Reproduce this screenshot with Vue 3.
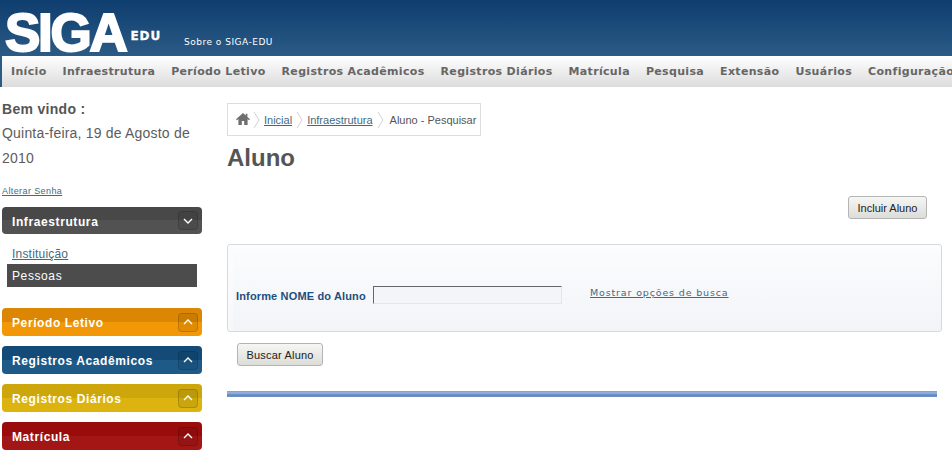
<template>
  <div class="page">
    <header class="top">
      <div class="logo">SIGA<span class="logo-edu">EDU</span></div>
      <a class="about">Sobre o SIGA-EDU</a>
    </header>

    <nav class="nav">
      <a v-for="item in navItems" :key="item">{{ item }}</a>
    </nav>

    <div class="columns">
      <aside class="side">
        <h4>Bem vindo :</h4>
        <p class="date">Quinta-feira, 19 de Agosto de 2010</p>
        <a class="pass">Alterar Senha</a>

        <div class="panel-head dark">
          <span>Infraestrutura</span>
          <i class="toggle">
            <svg width="10" height="6" viewBox="0 0 10 6"><path d="M1 1l4 4 4-4" /></svg>
          </i>
        </div>
        <ul class="sub">
          <li><a>Instituição</a></li>
          <li class="current">Pessoas</li>
        </ul>

        <div v-for="p in panels" :key="p.label" class="panel-head" :class="p.tone">
          <span>{{ p.label }}</span>
          <i class="toggle">
            <svg width="10" height="6" viewBox="0 0 10 6"><path d="M1 5l4-4 4 4" /></svg>
          </i>
        </div>
      </aside>

      <main class="main">
        <div class="crumbs">
          <svg class="home" width="14" height="12" viewBox="0 0 14 12">
            <path d="M7 0L0 6.200l1 1L2.400 6v6h3.400V8h2.400v4h3.400V6L13 7.200l1-1-2.600-2.300V.8H9.800v1.700z" />
          </svg>
          <svg class="sep" width="7" height="18" viewBox="0 0 7 18"><path d="M1 1l5 8-5 8" /></svg>
          <a>Inicial</a>
          <svg class="sep" width="7" height="18" viewBox="0 0 7 18"><path d="M1 1l5 8-5 8" /></svg>
          <a>Infraestrutura</a>
          <svg class="sep" width="7" height="18" viewBox="0 0 7 18"><path d="M1 1l5 8-5 8" /></svg>
          <span class="here">Aluno - Pesquisar</span>
        </div>

        <h1>Aluno</h1>

        <div class="actions">
          <button class="btn">Incluir Aluno</button>
        </div>

        <form class="search" @submit.prevent>
          <label for="nome">Informe NOME do Aluno</label>
          <input id="nome" type="text" />
          <a class="more">Mostrar opções de busca</a>
        </form>

        <button class="btn find">Buscar Aluno</button>

        <div class="rule"></div>
      </main>
    </div>
  </div>
</template>

<script setup>
const navItems = [
  'Início',
  'Infraestrutura',
  'Período Letivo',
  'Registros Acadêmicos',
  'Registros Diários',
  'Matrícula',
  'Pesquisa',
  'Extensão',
  'Usuários',
  'Configuração'
]

const panels = [
  { label: 'Período Letivo', tone: 'orange' },
  { label: 'Registros Acadêmicos', tone: 'blue' },
  { label: 'Registros Diários', tone: 'yellow' },
  { label: 'Matrícula', tone: 'red' }
]
</script>

<style>
html,
body {
  margin: 0;
  overflow: hidden;
  background: #fff;
}
</style>

<style scoped>
.page {
  width: 952px;
  height: 455px;
  overflow: hidden;
  font-family: "Liberation Sans", Arial, sans-serif;
  color: #555;
  background: #fff;
}

a {
  color: #3f6b7f;
  text-decoration: underline;
}

/* cabecalho */
.top {
  height: 56px;
  display: flex;
  align-items: flex-start;
  background: linear-gradient(#0e3d6f, #2b5b85);
}

.logo {
  width: 179px;
  margin: 8px 0 0 5px;
  font-size: 53px;
  line-height: 50px;
  font-weight: 700;
  letter-spacing: -2.300px;
  color: #fff;
  -webkit-text-stroke: 2px #fff;
  white-space: nowrap;
}

.logo-edu {
  display: inline-block;
  margin-left: 5px;
  font-family: "DejaVu Sans", sans-serif;
  font-size: 12px;
  line-height: 12px;
  letter-spacing: 1px;
  vertical-align: 11px;
  -webkit-text-stroke: 0.3px #fff;
}

.about {
  margin-top: 36px;
  font-family: "DejaVu Sans", sans-serif;
  font-size: 9px;
  line-height: 12px;
  letter-spacing: 0.5px;
  color: #fff;
  text-decoration: none;
}

.nav {
  height: 31px;
  display: flex;
  align-items: center;
  gap: 16px;
  padding-left: 9px;
  border-left: 2px solid #2b5b85;
  overflow: hidden;
  white-space: nowrap;
  background: linear-gradient(#fff, #dcdcdc);
}

.nav a {
  flex: none;
  font-family: "DejaVu Sans", sans-serif;
  font-size: 11px;
  font-weight: 700;
  letter-spacing: 0.33px;
  color: #666;
  text-decoration: none;
}

.columns {
  display: flex;
}

/* coluna esquerda */
.side {
  flex: none;
  width: 200px;
  margin-left: 2px;
  padding-top: 13px;
}

.side h4 {
  margin: 0;
  font-size: 14px;
  line-height: 18px;
  letter-spacing: 0.3px;
}

.date {
  margin: 3px 0 0;
  font-size: 14px;
  line-height: 25px;
  letter-spacing: 0.2px;
  color: #5c5c5c;
}

.pass {
  display: block;
  margin-top: 14px;
  font-size: 9px;
  line-height: 12px;
  letter-spacing: 0.4px;
}

.panel-head {
  height: 28px;
  margin-top: 10px;
  padding: 0 4px 0 10px;
  display: flex;
  align-items: center;
  justify-content: space-between;
  border-radius: 4px;
  font-size: 12px;
  font-weight: 700;
  letter-spacing: 0.6px;
  color: #fff;
}

.panel-head span {
  padding-top: 2px;
}

.panel-head.dark {
  height: 27px;
  background: linear-gradient(#484848 50%, #525252 50%);
}
.orange {
  background: linear-gradient(#db8703 50%, #f29705 50%);
}
.blue {
  background: linear-gradient(#134a77 50%, #1d5a88 50%);
}
.yellow {
  background: linear-gradient(#cda60b 50%, #dcb30f 50%);
}
.red {
  background: linear-gradient(#9a0c0c 50%, #a21616 50%);
}

.toggle {
  width: 20px;
  height: 19px;
  box-sizing: border-box;
  display: flex;
  align-items: center;
  justify-content: center;
  border: 1px solid rgba(0, 0, 0, 0.15);
  border-radius: 4px;
  background: rgba(0, 0, 0, 0.08);
}

.toggle svg {
  fill: none;
  stroke: #fff;
  stroke-width: 1.4;
}

.sub {
  list-style: none;
  margin: 0;
  padding: 11px 5px;
  font-size: 12px;
  letter-spacing: 0.2px;
}

.sub li {
  height: 19px;
  line-height: 18px;
  padding-left: 5px;
}

.sub .current {
  height: 23px;
  line-height: 24px;
  letter-spacing: 0.6px;
  color: #fff;
  background: #4c4c4c;
}

/* conteudo */
.main {
  flex: none;
  width: 715px;
  margin-left: 25px;
  padding-top: 16px;
}

.crumbs {
  box-sizing: border-box;
  width: 254px;
  height: 33px;
  display: flex;
  align-items: center;
  gap: 4px;
  padding-left: 8px;
  border: 1px solid #ddd;
  font-size: 11px;
}

.home {
  fill: #6f6f6f;
  margin-bottom: 2px;
  margin-right: -1px;
}

.sep {
  fill: none;
  stroke: #d2d2d2;
}

.here {
  margin-left: 2px;
}

.main h1 {
  margin: 8px 0 0;
  font-size: 24px;
  line-height: 27px;
  font-weight: 700;
  color: #555;
}

.actions {
  width: 700px;
  margin-top: 25px;
  display: flex;
  justify-content: flex-end;
}

.btn {
  box-sizing: border-box;
  height: 23px;
  padding: 0;
  border: 1px solid #b4b4b4;
  border-radius: 3px;
  font-family: "Liberation Sans", Arial, sans-serif;
  font-size: 11px;
  color: #222;
  background: linear-gradient(#f6f6f4, #dcdcd8);
}

.actions .btn {
  width: 79px;
}

.search {
  box-sizing: border-box;
  height: 88px;
  margin-top: 25px;
  display: flex;
  align-items: center;
  padding: 13px 0 0 8px;
  border: 1px solid #d5dade;
  border-radius: 3px;
  background: linear-gradient(#fbfcfd, #f3f4f8);
  box-shadow: inset 5px 5px 0 rgba(255, 255, 255, 0.35);
}

.search label {
  width: 137px;
  margin-top: 2px;
  font-size: 11px;
  font-weight: 700;
  letter-spacing: 0.15px;
  color: #1f4f7c;
}

.search input {
  box-sizing: border-box;
  width: 189px;
  height: 18px;
  padding: 0;
  outline: none;
  border: 1px solid #e4e6e8;
  border-top-color: #666;
  border-left-color: #666;
  background: #f4f5f8;
}

.more {
  margin-left: 28px;
  margin-bottom: 4px;
  font-family: "DejaVu Sans", sans-serif;
  font-size: 9.500px;
  letter-spacing: 0.85px;
}

.find {
  display: block;
  width: 86px;
  margin: 11px 0 0 10px;
  letter-spacing: 0.2px;
}

.rule {
  width: 710px;
  height: 6px;
  margin-top: 25px;
  background: linear-gradient(#7c9dd0, #9ab5e0 33%, #5f86c0 66%, #6f93c9);
}
</style>
